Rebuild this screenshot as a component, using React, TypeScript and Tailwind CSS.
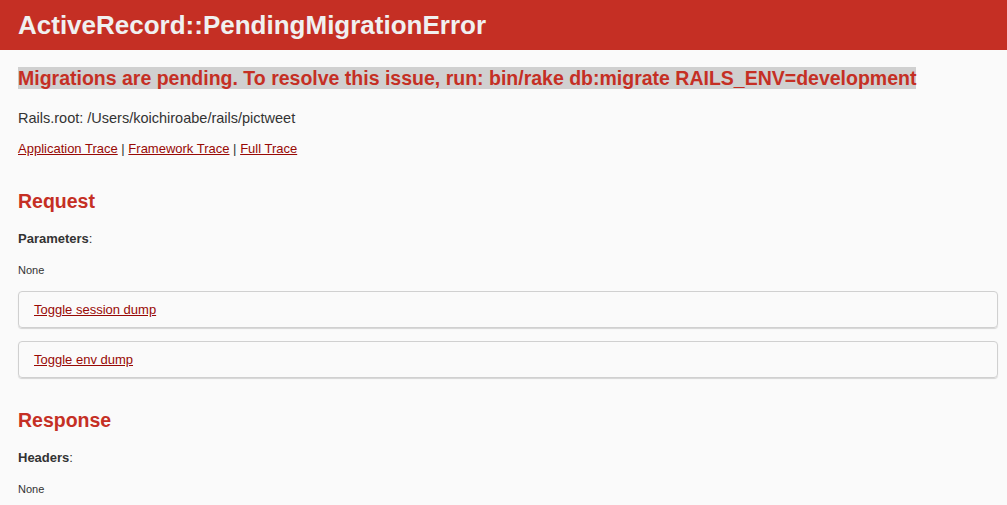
import React from "react";

const font = "font-['Liberation_Sans',Helvetica,Arial,sans-serif]";

const Details = ({ label }: { label: string }) => (
  <div className="w-[980px] rounded-[4px] border border-[#d0d0d0] shadow-[0_1px_1px_rgba(0,0,0,0.15)] h-[37px] flex items-center px-[15px]">
    <a href="#" className="text-[#980905] underline text-[13px]">
      {label}
    </a>
  </div>
);

const App = () => {
  return (
    <div className={`min-h-[505px] bg-[#fafafa] text-[#333] ${font}`}>
      <header className="h-[50px] bg-[#c52f24] flex items-center px-[18px] pt-[1px]">
        <h1 className="text-[26px] font-bold text-[#f0f0f0]">
          ActiveRecord::PendingMigrationError
        </h1>
      </header>
      <div className="px-[18px]">
        <h2 className="mt-[18px] text-[19.5px] font-bold text-[#c52f24] leading-[21px]">
          <span className="bg-[#d0d0d0]">
            Migrations are pending. To resolve this issue, run: bin/rake db:migrate RAILS_ENV=development
          </span>
        </h2>
        <p className="mt-[20px] text-[14.5px] leading-[18px]">
          Rails.root: /Users/koichiroabe/rails/pictweet
        </p>
        <p className="mt-[13px] text-[13px] leading-[18px]">
          <a href="#" className="text-[#980905] underline">Application Trace</a> |{" "}
          <a href="#" className="text-[#980905] underline">Framework Trace</a> |{" "}
          <a href="#" className="text-[#980905] underline">Full Trace</a>
        </p>

        <h2 className="mt-[31px] text-[19.5px] font-bold text-[#c52f24] leading-[25px]">Request</h2>
        <p className="mt-[16px] text-[13px] leading-[18px]">
          <b>Parameters</b>:
        </p>
        <p className="mt-[13px] text-[11px] leading-[18px]">None</p>

        <div className="mt-[12px] flex flex-col gap-[13px]">
          <Details label="Toggle session dump" />
          <Details label="Toggle env dump" />
        </div>

        <h2 className="mt-[30px] text-[19.5px] font-bold text-[#c52f24] leading-[25px]">Response</h2>
        <p className="mt-[16px] text-[13px] leading-[18px]">
          <b>Headers</b>:
        </p>
        <p className="mt-[13px] text-[11px] leading-[18px]">None</p>
      </div>
    </div>
  );
};

export default App;
